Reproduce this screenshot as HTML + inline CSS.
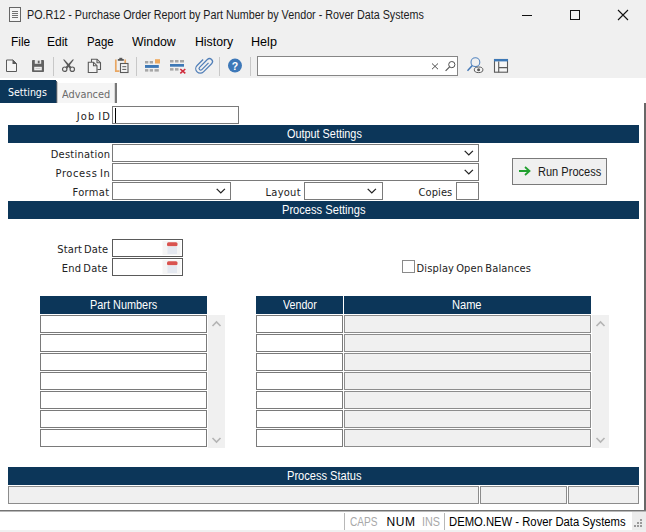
<!DOCTYPE html>
<html>
<head>
<meta charset="utf-8">
<title>PO.R12 - Purchase Order Report by Part Number by Vendor</title>
<style>
html,body{margin:0;padding:0;}
body{width:646px;height:532px;position:relative;overflow:hidden;background:#f0f0f0;font-family:"Liberation Sans",sans-serif;color:#000;}
.abs{position:absolute;}
.t{position:absolute;white-space:nowrap;line-height:normal;transform-origin:0 0;}
.bar{position:absolute;left:8px;width:631px;height:18px;background:#0c3659;}
.inp{position:absolute;background:#fff;border:1px solid #7a7a7a;box-sizing:border-box;}
.ro{position:absolute;background:#f0f0f0;border:1px solid #8c8c8c;box-sizing:border-box;}
.hd{position:absolute;background:#0c3659;height:18px;top:296px;}
.sb{position:absolute;background:#f0f0f0;}
.sep{position:absolute;top:57px;width:1px;height:19px;background:#c8c8c8;}
svg{position:absolute;overflow:visible;}
</style>
</head>
<body>
<!-- title bar -->
<svg style="left:9px;top:7px" width="12" height="15" viewBox="0 0 12 15"><rect x="0.5" y="0.5" width="11" height="14" fill="#f4f4f4" stroke="#666" stroke-width="1"/><path d="M3 4.500h6M3 6.500h6M3 8.500h6M3 10.500h6" stroke="#707070" stroke-width="1"/></svg>
<svg style="left:522px;top:10px" width="110" height="11" viewBox="0 0 110 11">
<path d="M0 5.500h10" stroke="#111" stroke-width="1"/>
<rect x="48.500" y="0.500" width="9" height="9" fill="none" stroke="#111" stroke-width="1"/>
<path d="M96 0l10 10M106 0l-10 10" stroke="#111" stroke-width="1.100"/>
</svg>

<!-- toolbar -->
<div id="toolbar">
<div class="sep" style="left:53px"></div>
<div class="sep" style="left:136px"></div>
<div class="sep" style="left:219px"></div>
<div class="sep" style="left:250px"></div>
<div class="inp" style="left:257px;top:56px;width:201px;height:20px;border-color:#868686"></div>
<svg style="left:0;top:0" width="646" height="80" viewBox="0 0 646 80">
<!-- new -->
<path d="M6.500 60h6.500l3.500 3.500v8h-10z" fill="#f4f4f4" stroke="#5a5a5a" stroke-width="1"/>
<path d="M12.500 59.500l4.500 4.500h-4.500z" fill="#5a5a5a"/>
<!-- save -->
<rect x="32" y="60" width="12" height="12" rx="0.800" fill="#626262"/>
<rect x="34.800" y="60" width="6.400" height="3.800" fill="#e6e6e6"/>
<rect x="37.800" y="60.700" width="1.800" height="2.600" fill="#626262"/>
<rect x="34.200" y="66.800" width="7.600" height="3.500" fill="#f0f0f0"/>
<rect x="35.500" y="68" width="5" height="0.900" fill="#c8c8c8"/>
<!-- scissors -->
<g transform="translate(61,59)">
<path d="M2 0.500L3.400 0.500L10.400 8L8.600 9.400Z" fill="#5a5a5a"/>
<path d="M13 0.500L11.600 0.500L4.600 8L6.400 9.400Z" fill="#5a5a5a"/>
<circle cx="3.700" cy="10.200" r="2.200" fill="none" stroke="#5a5a5a" stroke-width="1.200"/>
<circle cx="11.300" cy="10.200" r="2.200" fill="none" stroke="#5a5a5a" stroke-width="1.200"/>
</g>
<!-- copy -->
<g transform="translate(87,58)" fill="#f2f2f2" stroke="#5a5a5a" stroke-width="1.100">
<path d="M4.500 4V1.200H10L13.500 4.700V11.500H10.500"/>
<path d="M10 1.200v3.500h3.500" fill="none"/>
<path d="M1.300 4.200H6.500L10 7.700V14.500H1.300Z"/>
<path d="M6.500 4.200v3.500h3.500" fill="none"/>
</g>
<!-- paste -->
<g transform="translate(114,57)">
<path d="M1.800 2.500V14.200H5.500" fill="none" stroke="#e9a763" stroke-width="1.700"/>
<path d="M11.200 2.500V6" fill="none" stroke="#e9a763" stroke-width="1.700"/>
<path d="M3.800 2h6v1.800h-6z" fill="#5a5a5a"/>
<rect x="5.300" y="0.800" width="3" height="2" fill="#5a5a5a"/>
<rect x="6.500" y="6.500" width="7.500" height="9" fill="#f4f4f4" stroke="#5a5a5a" stroke-width="1.100"/>
<path d="M8.300 9.700h4M8.300 12.400h4" stroke="#5a5a5a" stroke-width="1"/>
</g>
<!-- insert row -->
<g fill="#a6a6a6">
<rect x="145" y="61" width="3.300" height="2.500"/><rect x="149.700" y="61" width="3.300" height="2.500"/>
<rect x="145" y="69.100" width="3.300" height="2.500"/><rect x="149.700" y="69.100" width="3.300" height="2.500"/><rect x="154.500" y="69.100" width="4.300" height="2.500"/>
</g>
<rect x="145" y="65" width="13.800" height="2.900" fill="#3d78b6"/>
<rect x="155" y="59.200" width="5" height="4.300" fill="#efaa5e"/>
<!-- delete row -->
<g fill="#a6a6a6">
<rect x="170" y="60" width="3.500" height="2.500"/><rect x="175" y="60" width="3.500" height="2.500"/><rect x="180" y="60" width="4" height="2.500"/>
<rect x="170" y="68.100" width="3.500" height="2.500"/><rect x="175" y="68.100" width="3.500" height="2.500"/>
</g>
<rect x="170" y="64" width="14" height="2.700" fill="#3d78b6"/>
<path d="M180.300 69l5 4.300M185.300 69l-5 4.300" stroke="#cf2a3a" stroke-width="1.600" fill="none"/>
<!-- paperclip -->
<g transform="translate(204.300,65.700) rotate(45)" fill="none" stroke="#517fb8" stroke-width="1.250">
<path d="M1 -5V4.500a1.600 1.600 0 0 1 -3.200 0V-6.500a3 3 0 0 1 6 0V5a4.500 4.500 0 0 1 -9 0V-3.500"/>
</g>
<!-- help -->
<circle cx="235" cy="65.600" r="7" fill="#3d78b8"/>
<text x="235" y="69.600" font-size="10.500" font-weight="bold" fill="#fff" text-anchor="middle" font-family="Liberation Sans, sans-serif">?</text>
<!-- search box glyphs -->
<path d="M432 63.500l6 5.700M438 63.500l-6 5.700" stroke="#505050" stroke-width="1" fill="none"/>
<circle cx="451.800" cy="64.600" r="3.100" fill="none" stroke="#505050" stroke-width="1"/>
<path d="M449.600 66.900l-4 4" stroke="#505050" stroke-width="1.200"/>
<!-- find/eye -->
<circle cx="475.400" cy="62.200" r="4.400" fill="none" stroke="#5586c0" stroke-width="1.100"/>
<path d="M472.300 65.600l-4.800 5.200" stroke="#4478b6" stroke-width="1.500"/>
<ellipse cx="478.600" cy="69.800" rx="4.300" ry="2.800" fill="#f4f4f4" stroke="#5a5a5a" stroke-width="1"/>
<circle cx="478.600" cy="69.800" r="1.500" fill="#5a5a5a"/>
<!-- layout -->
<rect x="494.500" y="59.500" width="13" height="12.700" fill="#f6f6f6" stroke="#5a5a5a" stroke-width="1.100"/>
<rect x="494" y="59" width="14" height="2.400" fill="#3d78b6"/>
<path d="M498.700 61.400V72.200M498.700 67.600H507.500" stroke="#5a5a5a" stroke-width="1.100" fill="none"/>
</svg>
</div>

<!-- client -->
<div class="abs" style="left:0;top:78px;width:646px;height:452px;background:#fff"></div>
<div class="abs" style="left:644px;top:103px;width:2px;height:408px;background:#686868"></div>
<div class="abs" style="left:0;top:510px;width:646px;height:1px;background:#747474"></div>
<div class="abs" style="left:0;top:511px;width:646px;height:1px;background:#b8b8b8"></div>
<div class="abs" style="left:632px;top:512px;width:14px;height:18px;background:#ececec"></div>

<!-- tabs -->
<div class="abs" style="left:0;top:80px;width:56px;height:23px;background:#0c3659"></div>
<div class="abs" style="left:56px;top:81px;width:1px;height:22px;background:#4a5866"></div><div class="abs" style="left:57px;top:82px;width:1px;height:21px;background:#c8c8c8"></div>
<div class="abs" style="left:58px;top:83px;width:57px;height:20px;background:#f5f5f5"></div>
<div class="abs" style="left:114px;top:83px;width:1px;height:20px;background:#d8d8d8"></div><div class="abs" style="left:115px;top:83px;width:2px;height:20px;background:#787878"></div>

<!-- Job ID -->
<div class="inp" style="left:112px;top:106px;width:127px;height:18px"></div>
<div class="abs" style="left:115px;top:108px;width:1px;height:15px;background:#000"></div>

<div class="bar" style="top:125px"></div>

<div class="inp" style="left:112px;top:144px;width:367px;height:18px"></div>
<div class="inp" style="left:112px;top:163px;width:367px;height:18px"></div>
<div class="inp" style="left:112px;top:182px;width:119px;height:18px"></div>
<div class="inp" style="left:304px;top:182px;width:79px;height:18px"></div>
<div class="inp" style="left:456px;top:182px;width:23px;height:18px"></div>
<svg style="left:464px;top:150px" width="10" height="6" viewBox="0 0 10 6"><path d="M0.700 0.900l4.100 4l4.100-4" fill="none" stroke="#222" stroke-width="1.300"/></svg>
<svg style="left:464px;top:169px" width="10" height="6" viewBox="0 0 10 6"><path d="M0.700 0.900l4.100 4l4.100-4" fill="none" stroke="#222" stroke-width="1.300"/></svg>
<svg style="left:216px;top:188px" width="10" height="6" viewBox="0 0 10 6"><path d="M0.700 0.900l4.100 4l4.100-4" fill="none" stroke="#222" stroke-width="1.300"/></svg>
<svg style="left:367px;top:188px" width="10" height="6" viewBox="0 0 10 6"><path d="M0.700 0.900l4.100 4l4.100-4" fill="none" stroke="#222" stroke-width="1.300"/></svg>

<!-- Run Process -->
<div class="abs" style="left:512px;top:158px;width:95px;height:27px;box-sizing:border-box;border:1px solid #7a7a7a;background:#f0f0f0"></div>
<svg style="left:519px;top:166px" width="12" height="10" viewBox="0 0 12 10"><path d="M0 5h10M6 1l4.500 4l-4.500 4" fill="none" stroke="#22a030" stroke-width="1.800"/></svg>

<div class="bar" style="top:201px"></div>

<div class="inp" style="left:112px;top:239px;width:71px;height:18px;border-color:#5a5a5a"></div>
<div class="inp" style="left:112px;top:258px;width:71px;height:18px;border-color:#5a5a5a"></div>
<svg style="left:163px;top:241px" width="17" height="14" viewBox="0 0 17 14"><rect x="-0.500" y="0" width="18" height="14" fill="#f5f5f5"/><rect x="4" y="1.300" width="10.500" height="4" rx="1.500" fill="#d9534f"/><rect x="4.500" y="5.500" width="9.500" height="7.500" fill="#e4e8f0"/></svg>
<svg style="left:163px;top:260px" width="17" height="14" viewBox="0 0 17 14"><rect x="-0.500" y="0" width="18" height="14" fill="#f5f5f5"/><rect x="4" y="1.300" width="10.500" height="4" rx="1.500" fill="#d9534f"/><rect x="4.500" y="5.500" width="9.500" height="7.500" fill="#e4e8f0"/></svg>

<div class="inp" style="left:402px;top:260px;width:13px;height:13px;border-color:#8a8a8a"></div>

<!-- grids -->
<div class="hd" style="left:40px;width:167px"></div>
<div class="hd" style="left:256px;width:87px"></div>
<div class="hd" style="left:344px;width:247px"></div>
<div class="sb" style="left:208px;top:315px;width:17px;height:133px"></div>
<div class="sb" style="left:592px;top:315px;width:17px;height:133px"></div>
<svg style="left:212px;top:321px" width="9" height="6" viewBox="0 0 9 6"><path d="M0.500 5l4-4l4 4" fill="none" stroke="#b4b4b4" stroke-width="1.600"/></svg>
<svg style="left:212px;top:437px" width="9" height="6" viewBox="0 0 9 6"><path d="M0.500 1l4 4l4-4" fill="none" stroke="#b4b4b4" stroke-width="1.600"/></svg>
<svg style="left:596px;top:321px" width="9" height="6" viewBox="0 0 9 6"><path d="M0.500 5l4-4l4 4" fill="none" stroke="#b4b4b4" stroke-width="1.600"/></svg>
<svg style="left:596px;top:437px" width="9" height="6" viewBox="0 0 9 6"><path d="M0.500 1l4 4l4-4" fill="none" stroke="#b4b4b4" stroke-width="1.600"/></svg>
<div id="rows">
<div class="inp" style="left:40px;top:315px;width:167px;height:18px"></div><div class="inp" style="left:256px;top:315px;width:87px;height:18px"></div><div class="ro" style="left:344px;top:315px;width:247px;height:18px"></div>
<div class="inp" style="left:40px;top:334px;width:167px;height:18px"></div><div class="inp" style="left:256px;top:334px;width:87px;height:18px"></div><div class="ro" style="left:344px;top:334px;width:247px;height:18px"></div>
<div class="inp" style="left:40px;top:353px;width:167px;height:18px"></div><div class="inp" style="left:256px;top:353px;width:87px;height:18px"></div><div class="ro" style="left:344px;top:353px;width:247px;height:18px"></div>
<div class="inp" style="left:40px;top:372px;width:167px;height:18px"></div><div class="inp" style="left:256px;top:372px;width:87px;height:18px"></div><div class="ro" style="left:344px;top:372px;width:247px;height:18px"></div>
<div class="inp" style="left:40px;top:391px;width:167px;height:18px"></div><div class="inp" style="left:256px;top:391px;width:87px;height:18px"></div><div class="ro" style="left:344px;top:391px;width:247px;height:18px"></div>
<div class="inp" style="left:40px;top:410px;width:167px;height:18px"></div><div class="inp" style="left:256px;top:410px;width:87px;height:18px"></div><div class="ro" style="left:344px;top:410px;width:247px;height:18px"></div>
<div class="inp" style="left:40px;top:429px;width:167px;height:18px"></div><div class="inp" style="left:256px;top:429px;width:87px;height:18px"></div><div class="ro" style="left:344px;top:429px;width:247px;height:18px"></div>
</div>

<div class="bar" style="top:467px"></div>
<div class="ro" style="left:8px;top:486px;width:471px;height:18px"></div>
<div class="ro" style="left:480px;top:486px;width:87px;height:18px"></div>
<div class="ro" style="left:568px;top:486px;width:71px;height:18px"></div>

<!-- status bar -->
<div class="abs" style="left:344px;top:513px;width:1px;height:18px;background:#b8b8b8"></div>
<div class="abs" style="left:444px;top:513px;width:1px;height:18px;background:#b8b8b8"></div>
<svg style="left:634px;top:519px" width="10" height="10" viewBox="0 0 10 10"><g fill="#9a9a9a"><rect x="6" y="0" width="2" height="2"/><rect x="3" y="3" width="2" height="2"/><rect x="6" y="3" width="2" height="2"/><rect x="0" y="6" width="2" height="2"/><rect x="3" y="6" width="2" height="2"/><rect x="6" y="6" width="2" height="2"/></g></svg>
<div class="abs" style="left:0;top:530px;width:646px;height:2px;background:#f0f0f0"></div>

<div id="texts">
<span class="t" style="left:27.00px;top:8.00px;font-family:'Liberation Sans',sans-serif;font-size:12px;color:#1c1c1c;transform:scaleX(0.8962);word-spacing:0px">PO.R12 - Purchase Order Report by Part Number by Vendor - Rover Data Systems</span>
<span class="t" style="left:10.67px;top:34.00px;font-family:'Liberation Sans',sans-serif;font-size:12.8px;color:#000;transform:scaleX(0.9316);word-spacing:0px">File</span>
<span class="t" style="left:47.36px;top:34.00px;font-family:'Liberation Sans',sans-serif;font-size:12.8px;color:#000;transform:scaleX(0.9381);word-spacing:0px">Edit</span>
<span class="t" style="left:86.61px;top:34.00px;font-family:'Liberation Sans',sans-serif;font-size:12.8px;color:#000;transform:scaleX(0.8897);word-spacing:0px">Page</span>
<span class="t" style="left:131.80px;top:34.00px;font-family:'Liberation Sans',sans-serif;font-size:12.8px;color:#000;transform:scaleX(0.9609);word-spacing:0px">Window</span>
<span class="t" style="left:194.84px;top:34.00px;font-family:'Liberation Sans',sans-serif;font-size:12.8px;color:#000;transform:scaleX(0.9590);word-spacing:0px">History</span>
<span class="t" style="left:251.42px;top:34.00px;font-family:'Liberation Sans',sans-serif;font-size:12.8px;color:#000;transform:scaleX(0.9840);word-spacing:0px">Help</span>
<span class="t" style="left:8.40px;top:86.00px;font-family:'DejaVu Sans Condensed','DejaVu Sans',sans-serif;font-size:11px;color:#fff;transform:scaleX(0.9561);word-spacing:-1.3px;font-stretch:condensed">Settings</span>
<span class="t" style="left:62.00px;top:88.00px;font-family:'DejaVu Sans Condensed','DejaVu Sans',sans-serif;font-size:11px;color:#6a6a6a;transform:scaleX(0.9854);word-spacing:-1.3px;font-stretch:condensed">Advanced</span>
<span class="t" style="left:76.80px;top:110.00px;font-family:'DejaVu Sans Condensed','DejaVu Sans',sans-serif;font-size:11px;color:#222;letter-spacing:1.080px;word-spacing:-1.3px;font-stretch:condensed">Job ID</span>
<span class="t" style="left:50.70px;top:148.00px;font-family:'DejaVu Sans Condensed','DejaVu Sans',sans-serif;font-size:11px;color:#222;letter-spacing:0.250px;word-spacing:-1.3px;font-stretch:condensed">Destination</span>
<span class="t" style="left:55.50px;top:167.00px;font-family:'DejaVu Sans Condensed','DejaVu Sans',sans-serif;font-size:11px;color:#222;letter-spacing:0.633px;word-spacing:-1.3px;font-stretch:condensed">Process In</span>
<span class="t" style="left:72.50px;top:186.00px;font-family:'DejaVu Sans Condensed','DejaVu Sans',sans-serif;font-size:11px;color:#222;letter-spacing:0.340px;word-spacing:-1.3px;font-stretch:condensed">Format</span>
<span class="t" style="left:265.50px;top:186.00px;font-family:'DejaVu Sans Condensed','DejaVu Sans',sans-serif;font-size:11px;color:#222;letter-spacing:0.280px;word-spacing:-1.3px;font-stretch:condensed">Layout</span>
<span class="t" style="left:418.50px;top:186.00px;font-family:'DejaVu Sans Condensed','DejaVu Sans',sans-serif;font-size:11px;color:#222;letter-spacing:0.100px;word-spacing:-1.3px;font-stretch:condensed">Copies</span>
<span class="t" style="left:57.30px;top:243.00px;font-family:'DejaVu Sans Condensed','DejaVu Sans',sans-serif;font-size:11px;color:#222;letter-spacing:0.122px;word-spacing:-1.3px;font-stretch:condensed">Start Date</span>
<span class="t" style="left:61.80px;top:262.00px;font-family:'DejaVu Sans Condensed','DejaVu Sans',sans-serif;font-size:11px;color:#222;letter-spacing:0.229px;word-spacing:-1.3px;font-stretch:condensed">End Date</span>
<span class="t" style="left:416.50px;top:262.00px;font-family:'DejaVu Sans Condensed','DejaVu Sans',sans-serif;font-size:11px;color:#222;letter-spacing:0.165px;word-spacing:-1.3px;font-stretch:condensed">Display Open Balances</span>
<span class="t" style="left:286.50px;top:127.00px;font-family:'Liberation Sans',sans-serif;font-size:12px;color:#fff;transform:scaleX(0.9048);word-spacing:0px">Output Settings</span>
<span class="t" style="left:281.87px;top:203.00px;font-family:'Liberation Sans',sans-serif;font-size:12px;color:#fff;transform:scaleX(0.9270);word-spacing:0px">Process Settings</span>
<span class="t" style="left:286.58px;top:469.00px;font-family:'Liberation Sans',sans-serif;font-size:12px;color:#fff;transform:scaleX(0.9237);word-spacing:0px">Process Status</span>
<span class="t" style="left:90.19px;top:298.00px;font-family:'Liberation Sans',sans-serif;font-size:12px;color:#fff;transform:scaleX(0.9082);word-spacing:0px">Part Numbers</span>
<span class="t" style="left:283.20px;top:298.00px;font-family:'Liberation Sans',sans-serif;font-size:12px;color:#fff;transform:scaleX(0.8895);word-spacing:0px">Vendor</span>
<span class="t" style="left:452.48px;top:298.00px;font-family:'Liberation Sans',sans-serif;font-size:12px;color:#fff;transform:scaleX(0.9226);word-spacing:0px">Name</span>
<span class="t" style="left:537.68px;top:165.00px;font-family:'Liberation Sans',sans-serif;font-size:12px;color:#1a1a1a;transform:scaleX(0.9206);word-spacing:0px">Run Process</span>
<span class="t" style="left:349.80px;top:515.00px;font-family:'Liberation Sans',sans-serif;font-size:12px;color:#a8a8a8;transform:scaleX(0.8424);word-spacing:0px">CAPS</span>
<span class="t" style="left:386.50px;top:515.00px;font-family:'Liberation Sans',sans-serif;font-size:12px;color:#000;letter-spacing:0.600px;word-spacing:0px">NUM</span>
<span class="t" style="left:421.50px;top:515.00px;font-family:'Liberation Sans',sans-serif;font-size:12px;color:#a8a8a8;transform:scaleX(0.9000);word-spacing:0px">INS</span>
<span class="t" style="left:448.86px;top:515.00px;font-family:'Liberation Sans',sans-serif;font-size:12px;color:#000;transform:scaleX(0.9390);word-spacing:0px">DEMO.NEW - Rover Data Systems</span>
</div>
</body>
</html>
